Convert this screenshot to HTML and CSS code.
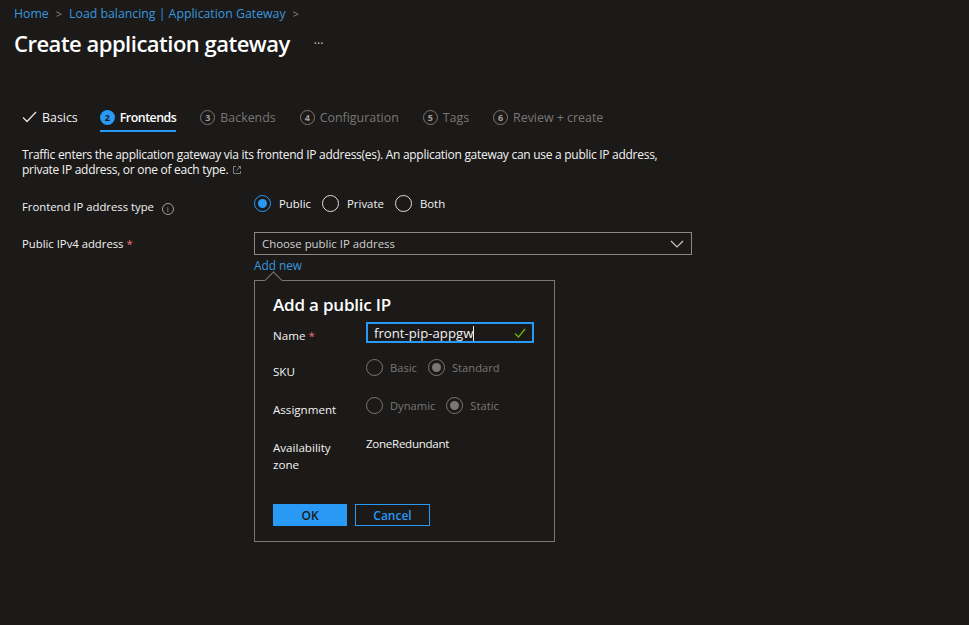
FILE: index.html
```html
<!DOCTYPE html>
<html>
<head>
<meta charset="utf-8">
<link rel="stylesheet" href="styles.css">
</head>
<body>
<div class="page">
  <nav class="crumbs">
    <a class="link">Home</a><span class="sep">&gt;</span><a class="link">Load balancing | Application Gateway</a><span class="sep">&gt;</span>
  </nav>
  <div class="titlebar">
    <h1 class="title">Create application gateway</h1>
    <span class="more">···</span>
  </div>

  <div class="tabs">
    <div class="tab done">
      <svg class="check" width="15" height="12" viewBox="0 0 15 12"><path d="M1 6.5 L5 10.5 L14 1" fill="none" stroke="#e6e6e6" stroke-width="1.3"/></svg>
      <span>Basics</span>
    </div>
    <div class="tab active"><span class="num">2</span><span>Frontends</span></div>
    <div class="tab off"><span class="num">3</span><span>Backends</span></div>
    <div class="tab off"><span class="num">4</span><span>Configuration</span></div>
    <div class="tab off"><span class="num">5</span><span>Tags</span></div>
    <div class="tab off"><span class="num">6</span><span>Review + create</span></div>
  </div>

  <p class="desc">Traffic enters the application gateway via its frontend IP address(es). An application gateway can use a public IP address, private IP address, or one of each type.<svg class="ext" width="10" height="10" viewBox="0 0 10 10"><path d="M4 1.5H1.5v7h7V6M6 1.5h2.5V4M8.5 1.5 4.5 5.5" fill="none" stroke="#8a8886" stroke-width="0.9"/></svg></p>

  <div class="row r1">
    <div class="label">Frontend IP address type <span class="info">i</span></div>
    <div class="radios">
      <label class="radio"><span class="dot on"></span>Public</label>
      <label class="radio"><span class="dot"></span>Private</label>
      <label class="radio"><span class="dot"></span>Both</label>
    </div>
  </div>

  <div class="row r2">
    <div class="label">Public IPv4 address <span class="req">*</span></div>
    <div class="field">
      <div class="select">
        <span>Choose public IP address</span>
        <svg width="14" height="8" viewBox="0 0 14 8"><path d="M1 1l6 6 6-6" fill="none" stroke="#c8c6c4" stroke-width="1.2"/></svg>
      </div>
      <a class="link addnew">Add new</a>
      <div class="callout">
        <div class="beak"></div>
        <h2 class="ctitle">Add a public IP</h2>
        <div class="crow first">
          <div class="clabel">Name <span class="req">*</span></div>
          <div class="input">
            <span class="itext">front-pip-appgw<span class="caret"></span></span>
            <svg width="12" height="10" viewBox="0 0 12 10"><path d="M1 5.5l3.5 3.5L11 1" fill="none" stroke="#6bb700" stroke-width="1.2"/></svg>
          </div>
        </div>
        <div class="crow">
          <div class="clabel">SKU</div>
          <div class="radios dis">
            <label class="radio"><span class="dot"></span>Basic</label>
            <label class="radio"><span class="dot on"></span>Standard</label>
          </div>
        </div>
        <div class="crow">
          <div class="clabel">Assignment</div>
          <div class="radios dis">
            <label class="radio"><span class="dot"></span>Dynamic</label>
            <label class="radio"><span class="dot on"></span>Static</label>
          </div>
        </div>
        <div class="crow zone">
          <div class="clabel">Availability zone</div>
          <div class="cval">ZoneRedundant</div>
        </div>
        <div class="buttons">
          <button class="btn primary">OK</button>
          <button class="btn secondary">Cancel</button>
        </div>
      </div>
    </div>
  </div>
</div>
</body>
</html>
```

FILE: styles.css
```css
* { box-sizing: border-box; }
html, body { margin: 0; padding: 0; }
body {
  background: #1b1a19;
  color: #f3f2f1;
  font-family: "Segoe UI", "Open Sans", sans-serif;
  width: 969px;
  height: 625px;
  overflow: hidden;
}
.page { padding: 4px 0 0 14px; }
.link { color: #3a96dd; text-decoration: none; }
.crumbs {
  font-size: 12.3px;
  line-height: 20px;
  display: flex;
  align-items: center;
}
.sep { color: #8a8886; margin: 0 7px 0 7px; font-size: 11px; }
.titlebar { display: flex; align-items: center; margin-top: 5px; }
.title {
  margin: 0;
  font-size: 22px;
  font-weight: 600;
  line-height: 28px;
  color: #ffffff;
  letter-spacing: -0.5px;
}
.more { margin-left: 24px; color: #c8c6c4; font-size: 12px; }

.tabs {
  display: flex;
  margin-top: 47px;
  margin-left: 8px;
  gap: 24px;
  font-size: 12.4px;
}
.tab {
  display: flex;
  align-items: center;
  height: 28px;
  gap: 5px;
  border-bottom: 2px solid transparent;
}
.tab.done { color: #f3f2f1; margin-right: -2px; }
.tab.active { color: #ffffff; font-weight: 600; border-bottom-color: #2899f5; letter-spacing: -0.5px; }
.tab.off { color: #797775; }
.num {
  width: 15px; height: 15px;
  border-radius: 50%;
  font-size: 9px;
  font-weight: 700;
  display: inline-flex;
  align-items: center;
  justify-content: center;
  letter-spacing: 0;
}
.tab.active .num { background: #2899f5; color: #1b1a19; }
.tab.off .num { border: 1px solid #797775; color: #a19f9d; }

.desc {
  margin: 15px 0 0 8px;
  font-size: 12px;
  line-height: 15px;
  color: #f3f2f1;
  width: 652px;
  letter-spacing: -0.28px;
}
.ext { margin-left: 4px; vertical-align: -1px; }

.row { display: grid; grid-template-columns: 232px 438px; margin-left: 8px; font-size: 11.3px; }
.r1 { margin-top: 18px; align-items: start; }
.r1 .label { padding-top: 2px; }
.r2 { margin-top: 15px; }
.r2 .label { padding-top: 2px; }
.label { color: #f3f2f1; line-height: 20px; }
.info {
  display: inline-flex; width: 12px; height: 12px; border-radius: 50%;
  border: 1px solid #a19f9d; color: #a19f9d; font-size: 8px;
  align-items: center; justify-content: center; margin-left: 5px; vertical-align: -1px;
}
.req { color: #f1707b; }
.radios { display: flex; gap: 11px; align-items: flex-start; }
.radio { display: flex; align-items: center; gap: 8px; font-size: 11.4px; color: #f3f2f1; line-height: 17px; }
.dot {
  width: 17px; height: 17px; border-radius: 50%;
  border: 1px solid #e1dfdd; position: relative;
}
.dot.on { border-color: #2899f5; }
.dot.on::after {
  content: ""; position: absolute; left: 3px; top: 3px;
  width: 9px; height: 9px; border-radius: 50%; background: #2899f5;
}
.radios.dis .radio { color: #797775; }
.radios.dis .dot { border-color: #797775; }
.radios.dis .dot.on::after { background: #797775; }

.field { position: relative; }
.select {
  height: 23px;
  border: 1px solid #8a8886;
  display: flex; align-items: center; justify-content: space-between;
  padding: 0 7px 0 7px;
  color: #d2d0ce;
  font-size: 11.4px;
}
.addnew { display: block; font-size: 11.8px; line-height: 18px; margin-top: 1px; }

.callout {
  position: absolute;
  left: 0; top: 48px;
  width: 301px; height: 262px;
  border: 1px solid #797775;
  background: #1b1a19;
  padding: 12px 18px 0 18px;
}
.beak {
  position: absolute;
  left: 12px; top: -7px;
  width: 13px; height: 13px;
  background: #1b1a19;
  border-left: 1px solid #797775;
  border-top: 1px solid #797775;
  transform: rotate(45deg);
}
.ctitle { margin: 0 0 5px 0; font-size: 17px; font-weight: 600; line-height: 24px; color: #ffffff; letter-spacing: -0.2px; }
.crow { display: grid; grid-template-columns: 93px 168px; font-size: 11.6px; min-height: 38px; align-items: start; }
.crow.first { min-height: 36px; }
.clabel { padding-top: 5px; line-height: 17px; color: #f3f2f1; }
.input {
  height: 21px; border: 2px solid #2899f5;
  display: flex; align-items: center; justify-content: space-between;
  padding: 0 6px 0 6px; color: #f3f2f1;
  font-size: 13.2px;
}
.caret { display: inline-block; width: 1px; height: 15px; background: #f3f2f1; vertical-align: -3px; }
.crow .radios { padding-top: 1px; gap: 11px; }
.crow .radio { gap: 7px; font-size: 11.2px; }
.zone .clabel { width: 70px; }
.zone .cval { padding-top: 1px; line-height: 17px; color: #f3f2f1; letter-spacing: -0.3px; }
.buttons { display: flex; gap: 8px; margin-top: 31px; }
.btn {
  height: 22px; width: 74px;
  font-family: inherit; font-size: 12px; font-weight: 600;
}
.btn.primary { background: #2899f5; border: 1px solid #2899f5; color: #1b1a19; }
.btn.secondary { background: transparent; border: 1px solid #2899f5; color: #2899f5; width: 75px; }
```
